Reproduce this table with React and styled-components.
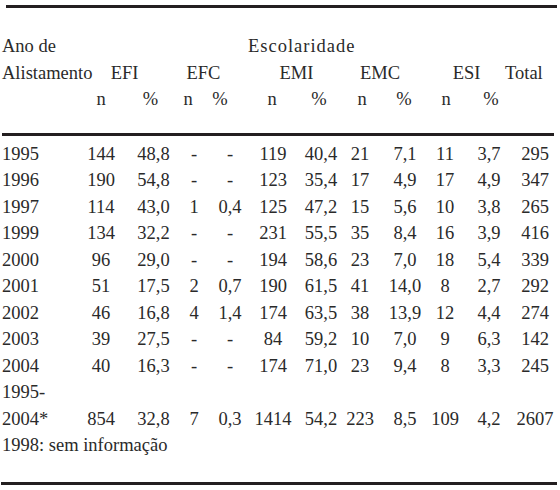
import React from "react";
import styled, { createGlobalStyle } from "styled-components";

const GlobalStyle = createGlobalStyle`
  html, body {
    margin: 0;
    padding: 0;
    background: #ffffff;
  }
  body {
    font-family: "Liberation Serif", "Times New Roman", serif;
    color: #2e2e2e;
  }
`;

// column widths and the nudges that put each column's numbers where they sit
const cols = [
  { w: 73, align: "left" },
  { w: 52 },
  { w: 47, pl: 6 },
  { w: 38, pl: 2 },
  { w: 40, pr: 4 },
  { w: 45, pr: 3 },
  { w: 44, pl: 4 },
  { w: 42, pr: 4 },
  { w: 42, pl: 2 },
  { w: 42, pr: 2 },
  { w: 38, pl: 6 },
  { w: 53, pl: 7 },
];

const subHead = [
  null,
  { label: "n" },
  { label: "%" },
  { label: "n", pr: 10 },
  { label: "%", pr: 24 },
  { label: "n", pr: 5 },
  { label: "%" },
  { label: "n" },
  { label: "%" },
  { label: "n" },
  { label: "%", pl: 10 },
  null,
];

const rows = [
  ["1995", "144", "48,8", "-", "-", "119", "40,4", "21", "7,1", "11", "3,7", "295"],
  ["1996", "190", "54,8", "-", "-", "123", "35,4", "17", "4,9", "17", "4,9", "347"],
  ["1997", "114", "43,0", "1", "0,4", "125", "47,2", "15", "5,6", "10", "3,8", "265"],
  ["1999", "134", "32,2", "-", "-", "231", "55,5", "35", "8,4", "16", "3,9", "416"],
  ["2000", "96", "29,0", "-", "-", "194", "58,6", "23", "7,0", "18", "5,4", "339"],
  ["2001", "51", "17,5", "2", "0,7", "190", "61,5", "41", "14,0", "8", "2,7", "292"],
  ["2002", "46", "16,8", "4", "1,4", "174", "63,5", "38", "13,9", "12", "4,4", "274"],
  ["2003", "39", "27,5", "-", "-", "84", "59,2", "10", "7,0", "9", "6,3", "142"],
  ["2004", "40", "16,3", "-", "-", "174", "71,0", "23", "9,4", "8", "3,3", "245"],
  ["1995-", "", "", "", "", "", "", "", "", "", "", ""],
  ["2004*", "854", "32,8", "7", "0,3", "1414", "54,2", "223", "8,5", "109", "4,2", "2607"],
];

export default function App() {
  return (
    <>
      <GlobalStyle />
      <Page>
        <Rule $inset={6} $width={551} />
        <Table>
          <colgroup>
            {cols.map((c, i) => (
              <col key={i} style={{ width: c.w }} />
            ))}
          </colgroup>
          <thead>
            <tr>
              <Cell $align="left">Ano de</Cell>
              <Cell colSpan={11} $align="left" $pl={173} $spread>
                Escolaridade
              </Cell>
            </tr>
            <tr>
              <Cell $align="left">Alistamento</Cell>
              <Cell colSpan={2}>EFI</Cell>
              <Cell colSpan={2} $pr={19}>EFC</Cell>
              <Cell colSpan={2}>EMI</Cell>
              <Cell colSpan={2} $pr={6}>EMC</Cell>
              <Cell colSpan={2} $pl={3}>ESI</Cell>
              <Cell $align="left">Total</Cell>
            </tr>
            <tr>
              {subHead.map((h, i) => (
                <Cell key={i} $pl={h && h.pl} $pr={h && h.pr}>
                  {h ? h.label : ""}
                </Cell>
              ))}
            </tr>
            <tr>
              <RuleCell colSpan={12}>
                <Rule $inset={0} $width={552} />
              </RuleCell>
            </tr>
          </thead>
          <tbody>
            {rows.map((r, ri) => (
              <tr key={ri}>
                {r.map((v, ci) => (
                  <Cell
                    key={ci}
                    $align={cols[ci].align}
                    $pl={cols[ci].pl}
                    $pr={cols[ci].pr}
                  >
                    {v}
                  </Cell>
                ))}
              </tr>
            ))}
            <tr>
              <Cell colSpan={12} $align="left">
                1998: sem informação
              </Cell>
            </tr>
          </tbody>
        </Table>
        <Rule $inset={1} $width={556} $top={23} />
      </Page>
    </>
  );
}

const Page = styled.div`
  width: 560px;
  padding-top: 5px;
`;

const Rule = styled.div`
  height: 3px;
  background: #231f20;
  margin-left: ${(p) => p.$inset}px;
  margin-top: ${(p) => p.$top || 0}px;
  width: ${(p) => p.$width}px;
`;

const Table = styled.table`
  table-layout: fixed;
  border-collapse: collapse;
  width: 556px;
  margin: 25px 0 0 2px;
  font-family: "Liberation Serif", "Times New Roman", serif;
  font-size: 18.5px;
  line-height: 26.5px;
  color: #2a2a2a;
`;

const Cell = styled.td`
  font-family: "Liberation Serif", "Times New Roman", serif;
  padding: 0 ${(p) => p.$pr || 0}px 0 ${(p) => p.$pl || 0}px;
  text-align: ${(p) => p.$align || "center"};
  letter-spacing: ${(p) => (p.$spread ? "1px" : "normal")};
  white-space: nowrap;
  font-weight: normal;
  vertical-align: baseline;
`;

const RuleCell = styled.td`
  padding: 20px 0 5px 0;
  line-height: 0;
`;
